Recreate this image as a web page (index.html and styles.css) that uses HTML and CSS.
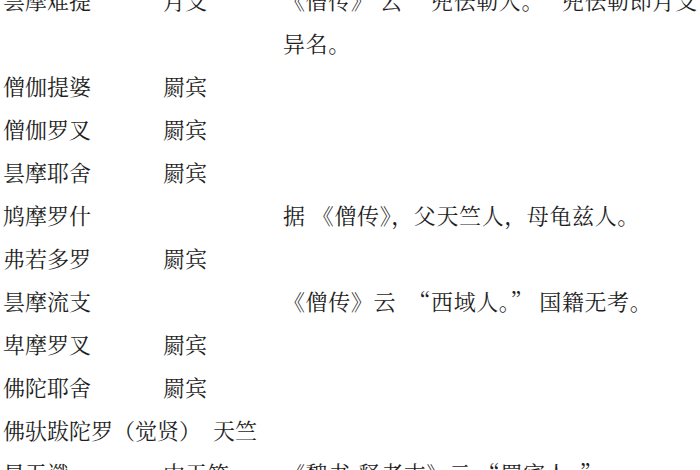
FILE: index.html
```html
<!DOCTYPE html>
<html lang="zh">
<head>
<meta charset="utf-8">
<title>译经僧籍贯表</title>
<link rel="stylesheet" href="styles.css">
</head>
<body>
<div class="table">
  <div class="row"><div class="name">昙摩难提</div><div class="place">月支</div><div class="note">《僧传》 云 “兜佉勒人。” 兜佉勒即月支异名。</div></div>
  <div class="row"><div class="name">僧伽提婆</div><div class="place">罽宾</div><div class="note"></div></div>
  <div class="row"><div class="name">僧伽罗叉</div><div class="place">罽宾</div><div class="note"></div></div>
  <div class="row"><div class="name">昙摩耶舍</div><div class="place">罽宾</div><div class="note"></div></div>
  <div class="row"><div class="name">鸠摩罗什</div><div class="place"></div><div class="note">据 《僧传》，父天竺人，母龟兹人。</div></div>
  <div class="row"><div class="name">弗若多罗</div><div class="place">罽宾</div><div class="note"></div></div>
  <div class="row"><div class="name">昙摩流支</div><div class="place"></div><div class="note">《僧传》云&nbsp;&nbsp;“西域人。”&nbsp;国籍无考。</div></div>
  <div class="row"><div class="name">卑摩罗叉</div><div class="place">罽宾</div><div class="note"></div></div>
  <div class="row"><div class="name">佛陀耶舍</div><div class="place">罽宾</div><div class="note"></div></div>
  <div class="row long"><div class="name">佛驮跋陀罗（觉贤）</div><div class="place">天竺</div><div class="note"></div></div>
  <div class="row"><div class="name">昙无谶</div><div class="place">中天竺</div><div class="note">《魏书·释老志》云 “罽宾人。”</div></div>
</div>
</body>
</html>
```
FILE: styles.css
```css
html, body {
  margin: 0;
  padding: 0;
  background: #ffffff;
  overflow: hidden;
}
body {
  width: 700px;
  height: 470px;
  color: #1e1e1e;
  font-family: "Noto Serif CJK SC", "Liberation Serif", "Noto Sans CJK SC", serif;
  font-size: 22px;
  line-height: 43px;
}
.table {
  margin: -22px 0 0 3px;
  display: flex;
  flex-direction: column;
}
.row {
  display: grid;
  grid-template-columns: 160px 120px 425px;
}
.row.long {
  grid-template-columns: 210px 70px 425px;
}
.name, .place {
  white-space: nowrap;
}
.note {
  letter-spacing: 0.6px;
}
```
